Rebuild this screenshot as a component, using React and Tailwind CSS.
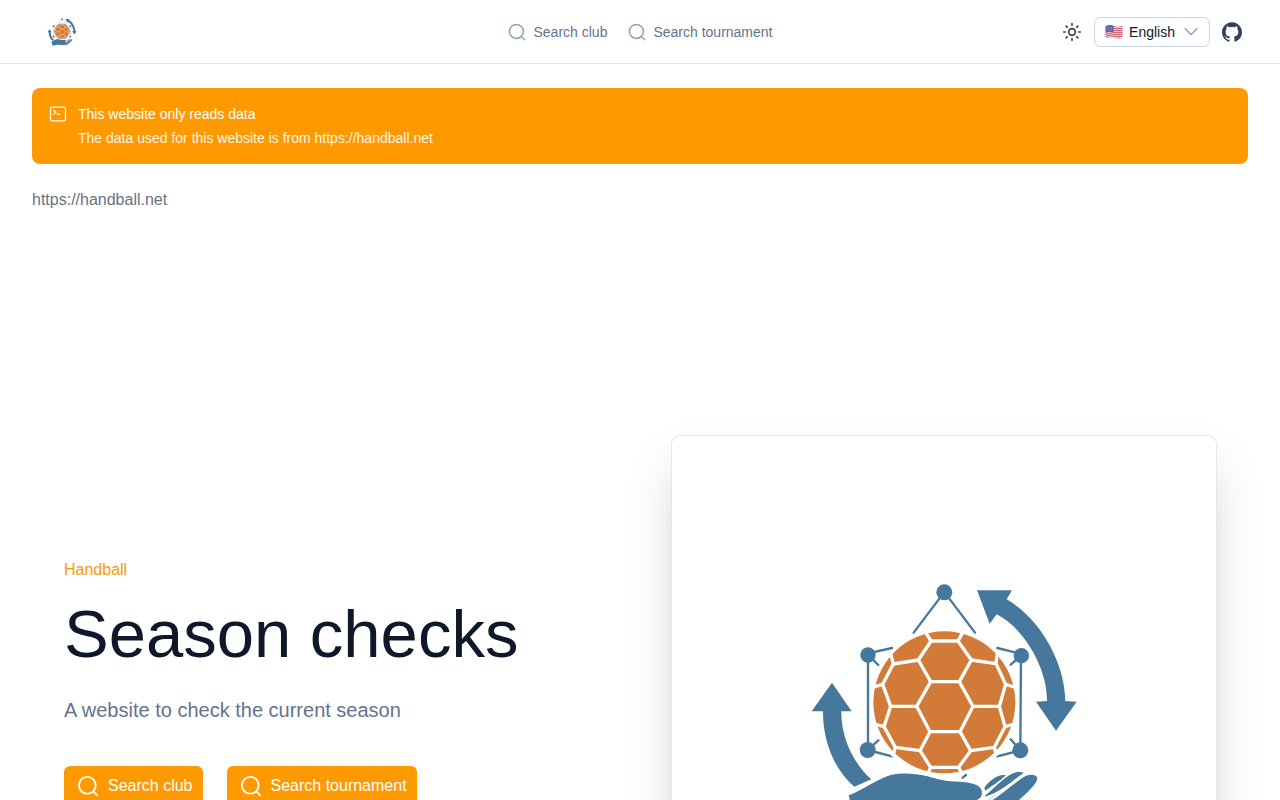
import { Sun } from "lucide-react";

function Logo({ className }) {
  return (
    <svg viewBox="0 0 544 544" className={className} role="img" aria-label="Season checks logo">
      <g transform="translate(128 134) scale(.33333)">
        <g fill="#46789d">
          <path d="M531 61L636 61L620 88C710 138 794 265 796 393L830 395L768 482L708 395L741 393C742 290 668 172 590 133L569 161Z" />
          <path d="M96 338L155 424L124 424C123 500 158 578 214 628L163 650C105 602 68 515 69 424L35 424Z" />
          <path d="M146 676C185 662 240 622 275 614C310 608 345 610 380 618C415 628 435 635 480 635C520 638 546 645 546 668C546 680 538 688 525 692L490 700L560 692L640 640C670 614 700 607 711 621C718 636 680 670 655 692L590 745C560 762 500 765 440 765L300 762C250 765 210 780 170 782Z" />
          <path d="M553 653C570 628 600 610 617 616C600 634 570 652 556 662Z" />
          <path d="M556 676C590 650 620 610 655 605L672 608C640 630 600 668 556 680Z" />
        </g>
        <path d="M540 706C580 694 630 640 685 607" stroke="#fff" strokeWidth="8" fill="none" />
        <path d="M488 623L498 615" stroke="#46789d" strokeWidth="7" strokeLinecap="round" />
        <g fill="#46789d">
          <circle cx="433" cy="67" r="24" />
          <circle cx="204" cy="255" r="23" />
          <circle cx="664" cy="257" r="23" />
          <circle cx="203" cy="540" r="24" />
          <circle cx="661" cy="541" r="24" />
        </g>
        <g stroke="#46789d" strokeWidth="7" strokeLinecap="round" fill="none">
          <path d="M418 86L341 188M448 86L525 188M204 255V540M663 257L661 541" />
          <path d="M204 250L276 234M210 260L235 285M664 252L592 234M660 260L632 284M203 540L235 511M203 540L276 559M661 541L632 508M661 541L592 559" />
        </g>
        <circle cx="433" cy="397" r="213" fill="#d27b39" />
        <g stroke="#fff" strokeWidth="10" strokeLinejoin="round" fill="none">
          <path d="M392 335H478L519 409L480 485H390L350 409Z" />
          <path d="M392 335L355 270L393 213H474L514 270L478 335M390 485L360 542L392 592H476L512 542L480 485" />
          <path d="M355 270L280 282L248 343L272 409H350M514 270L588 281L617 343L598 409H519" />
          <path d="M272 409L252 470L286 532L360 542M598 409L615 470L583 532L512 542" />
          <path d="M393 213L375 184M474 213L490 184M280 282L272 250M588 281L592 248M248 343L216 352M617 343L652 354" />
          <path d="M252 470L224 462M615 470L644 462M286 532L278 560M583 532L590 558M392 592L383 612M476 592L486 612" />
        </g>
      </g>
    </svg>
  );
}

function Flag() {
  return (
    <svg viewBox="0 0 18 14" className="w-[18px] h-[14px]" aria-hidden="true">
      <clipPath id="flag">
        <path d="M.5 1.5C4-.3 7 .4 9.500 1.200S14.500 2 17.500 1V12.500C14 14 11 13.300 8.500 12.600S3.500 12 .5 13Z" />
      </clipPath>
      <g clipPath="url(#flag)">
        <rect width="18" height="14" fill="#f3e9ec" />
        <path d="M0 1.500C4 0 7 1 9.500 1.500S14 2 18 1M0 3.500C4 2 7 3 9.500 3.500S14 4 18 3M0 5.500C4 4 7 5 9.500 5.500S14 6 18 5M0 7.500C4 6 7 7 9.500 7.500S14 8 18 7M0 9.500C4 8 7 9 9.500 9.500S14 10 18 9M0 11.500C4 10 7 11 9.500 11.500S14 12 18 11M0 13.500C4 12 7 13 9.500 13.500S14 14 18 13" stroke="#c8324a" fill="none" />
        <path d="M0 0H8.500V7.300C6 6.500 3 6.600 0 7.500Z" fill="#5a629c" />
        <path d="M1.500 2.500H8M1.500 4H8M1.500 5.500H8" stroke="#aab0d4" strokeWidth=".6" strokeDasharray=".8 .8" />
      </g>
    </svg>
  );
}

function SearchIcon({ className }) {
  return (
    <svg viewBox="0 0 24 24" className={className} fill="none" stroke="currentColor" strokeWidth="1.800" strokeLinecap="round" aria-hidden="true">
      <circle cx="11.300" cy="11.300" r="8.400" />
      <path d="M17.300 17.300L21.300 21.300" />
    </svg>
  );
}

function ChevronIcon({ className }) {
  return (
    <svg viewBox="0 0 24 24" className={className} fill="none" stroke="currentColor" strokeWidth="1.800" strokeLinecap="round" strokeLinejoin="round" aria-hidden="true">
      <path d="m19 8-7 7-7-7" />
    </svg>
  );
}

function Terminal() {
  return (
    <svg viewBox="0 0 24 24" className="size-5 shrink-0" fill="none" stroke="currentColor" strokeWidth="1.500" strokeLinecap="round" strokeLinejoin="round" aria-hidden="true">
      <path d="m6.750 7.500 3 2.250-3 2.250m4.500 0h3m-9 8.250h13.500A2.250 2.250 0 0 0 21 18V6a2.250 2.250 0 0 0-2.250-2.250H5.250A2.250 2.250 0 0 0 3 6v12a2.250 2.250 0 0 0 2.250 2.250Z" />
    </svg>
  );
}

function GitHub() {
  return (
    <svg viewBox="0 0 24 24" className="size-5" fill="currentColor" aria-hidden="true">
      <path d="M12 .297c-6.630 0-12 5.373-12 12 0 5.303 3.438 9.800 8.205 11.385.6.113.82-.258.82-.577 0-.285-.01-1.040-.015-2.040-3.338.724-4.042-1.610-4.042-1.610C4.422 18.070 3.633 17.700 3.633 17.700c-1.087-.744.084-.729.084-.729 1.205.084 1.838 1.236 1.838 1.236 1.070 1.835 2.809 1.305 3.495.998.108-.776.417-1.305.76-1.605-2.665-.3-5.466-1.332-5.466-5.930 0-1.310.465-2.380 1.235-3.220-.135-.303-.54-1.523.105-3.176 0 0 1.005-.322 3.300 1.230.96-.267 1.980-.399 3-.405 1.020.006 2.040.138 3 .405 2.280-1.552 3.285-1.230 3.285-1.230.645 1.653.24 2.873.12 3.176.765.840 1.230 1.910 1.230 3.220 0 4.610-2.805 5.625-5.475 5.920.42.360.81 1.096.81 2.220 0 1.606-.015 2.896-.015 3.286 0 .315.21.690.825.570C20.565 22.092 24 17.592 24 12.297c0-6.627-5.373-12-12-12" />
    </svg>
  );
}

function NavLink({ children }) {
  return (
    <a href="#" className="flex items-center gap-1.5 text-sm text-slate-500">
      <SearchIcon className="size-5 text-slate-400" />
      {children}
    </a>
  );
}

function CallToAction({ children }) {
  return (
    <a href="#" className="flex items-center gap-2 rounded-md bg-[#ff9900] py-2 pr-2.5 pl-3 text-base text-white">
      <SearchIcon className="size-6" />
      {children}
    </a>
  );
}

export default function App() {
  return (
    <div className="h-screen overflow-hidden bg-white font-['Liberation_Sans',sans-serif]">
      <header className="grid h-16 grid-cols-[1fr_auto_1fr] items-center border-b border-slate-200 px-8">
        <a href="#" aria-label="Home" className="justify-self-start">
          <Logo className="size-15" />
        </a>
        <nav className="flex gap-5">
          <NavLink>Search club</NavLink>
          <NavLink>Search tournament</NavLink>
        </nav>
        <div className="flex items-center justify-end gap-3 pr-1.5 text-slate-700">
          <button type="button" aria-label="Toggle theme">
            <Sun className="size-5" strokeWidth={2} />
          </button>
          <button type="button" className="flex items-center rounded-md border border-slate-300 py-1 pr-2 pl-2.5 text-sm text-slate-900">
            <Flag />
            <span className="mr-1.5 ml-1.5">English</span>
            <ChevronIcon className="size-5 text-slate-400" />
          </button>
          <a href="#" aria-label="GitHub">
            <GitHub />
          </a>
        </div>
      </header>
      <main className="px-8 pt-6">
        <section className="flex gap-2.5 rounded-lg bg-[#ff9900] p-4 text-sm text-white">
          <Terminal />
          <div>
            <p>This website only reads data</p>
            <p className="mt-1 opacity-90">The data used for this website is from https://handball.net</p>
          </div>
        </section>
        <p className="mt-6 text-base text-gray-500">https://handball.net</p>
        <section className="mt-56 grid grid-cols-2 items-center gap-16 px-8">
          <div className="pb-13">
            <p className="text-base text-[#ff9900]">Handball</p>
            <h1 className="mt-4 text-[67px] leading-[72px] text-slate-900">Season checks</h1>
            <p className="mt-6 text-xl leading-8 text-slate-500">A website to check the current season</p>
            <div className="mt-10 flex gap-6">
              <CallToAction>Search club</CallToAction>
              <CallToAction>Search tournament</CallToAction>
            </div>
          </div>
          <div className="rounded-lg shadow-2xl ring-1 ring-slate-200">
            <Logo className="w-full" />
          </div>
        </section>
      </main>
    </div>
  );
}
